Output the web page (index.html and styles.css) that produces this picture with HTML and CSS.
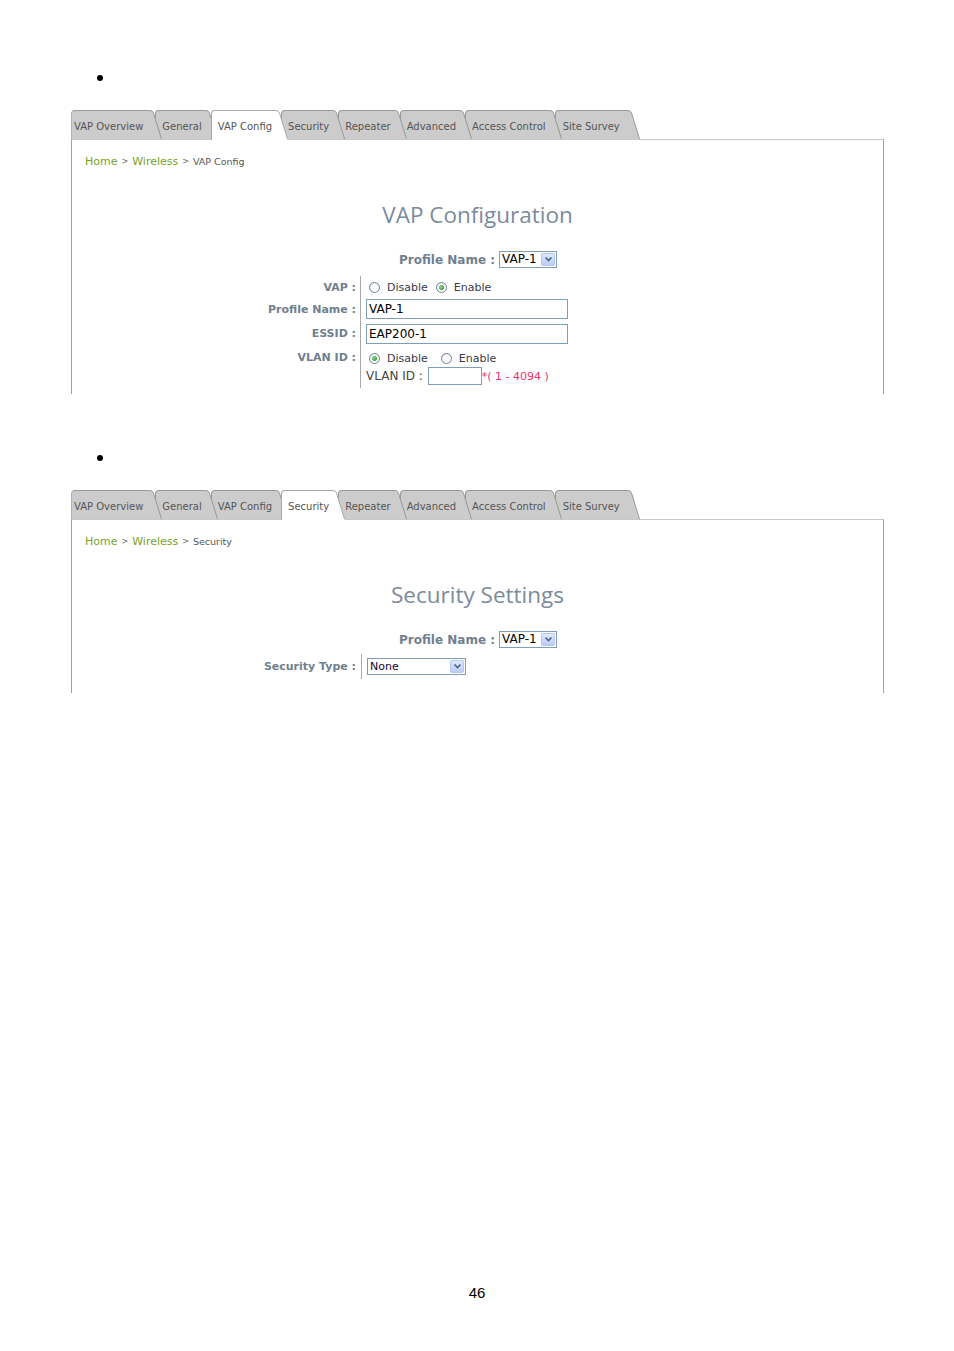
FILE: index.html
```html
<!DOCTYPE html>
<html>
<head>
<meta charset="utf-8">
<link rel="stylesheet" href="styles.css">
</head>
<body>
<div class="page">
  <div class="bullet"><span class="dot"></span></div>
  <div class="shot">
    <div class="tabs">
      <div class="tab first"><span class="tab-body">VAP Overview</span><svg class="tab-edge" width="14" height="29" viewBox="0 0 14 29"><path d="M0 0.5 H2 Q4.5 0.5 5.5 3 L13.5 29 H0 Z" class="edge-fill"/><path d="M0 0.5 H2 Q4.5 0.5 5.5 3 L13.5 29" class="edge-line"/></svg></div>
      <div class="tab"><span class="tab-body">General</span><svg class="tab-edge" width="14" height="29" viewBox="0 0 14 29"><path d="M0 0.5 H2 Q4.5 0.5 5.5 3 L13.5 29 H0 Z" class="edge-fill"/><path d="M0 0.5 H2 Q4.5 0.5 5.5 3 L13.5 29" class="edge-line"/></svg></div>
      <div class="tab active"><span class="tab-body">VAP Config</span><svg class="tab-edge" width="14" height="30" viewBox="0 0 14 30"><path d="M0 0.5 H2 Q4.5 0.5 5.5 3 L13.5 29 V30 H0 Z" class="edge-fill"/><path d="M0 0.5 H2 Q4.5 0.5 5.5 3 L13.5 29" class="edge-line"/></svg></div>
      <div class="tab"><span class="tab-body">Security</span><svg class="tab-edge" width="14" height="29" viewBox="0 0 14 29"><path d="M0 0.5 H2 Q4.5 0.5 5.5 3 L13.5 29 H0 Z" class="edge-fill"/><path d="M0 0.5 H2 Q4.5 0.5 5.5 3 L13.5 29" class="edge-line"/></svg></div>
      <div class="tab"><span class="tab-body">Repeater</span><svg class="tab-edge" width="14" height="29" viewBox="0 0 14 29"><path d="M0 0.5 H2 Q4.5 0.5 5.5 3 L13.5 29 H0 Z" class="edge-fill"/><path d="M0 0.5 H2 Q4.5 0.5 5.5 3 L13.5 29" class="edge-line"/></svg></div>
      <div class="tab"><span class="tab-body">Advanced</span><svg class="tab-edge" width="14" height="29" viewBox="0 0 14 29"><path d="M0 0.5 H2 Q4.5 0.5 5.5 3 L13.5 29 H0 Z" class="edge-fill"/><path d="M0 0.5 H2 Q4.5 0.5 5.5 3 L13.5 29" class="edge-line"/></svg></div>
      <div class="tab"><span class="tab-body">Access Control</span><svg class="tab-edge" width="14" height="29" viewBox="0 0 14 29"><path d="M0 0.5 H2 Q4.5 0.5 5.5 3 L13.5 29 H0 Z" class="edge-fill"/><path d="M0 0.5 H2 Q4.5 0.5 5.5 3 L13.5 29" class="edge-line"/></svg></div>
      <div class="tab last"><span class="tab-body">Site Survey</span><svg class="tab-edge" width="14" height="29" viewBox="0 0 14 29"><path d="M0 0.5 H2 Q4.5 0.5 5.5 3 L13.5 29 H0 Z" class="edge-fill"/><path d="M0 0.5 H2 Q4.5 0.5 5.5 3 L13.5 29" class="edge-line"/></svg></div>
    </div>
    <div class="panel panel-vap">
      <div class="crumb"><span class="crumb-link">Home</span><span class="crumb-sep">&gt;</span><span class="crumb-link">Wireless</span><span class="crumb-sep">&gt;</span><span class="crumb-cur">VAP Config</span></div>
      <div class="title">VAP Configuration</div>
      <div class="profile-row">
        <span class="profile-label">Profile Name :</span>
        <span class="select sel-small"><span class="select-text">VAP-1</span><span class="select-btn"><svg width="9" height="7" viewBox="0 0 9 7"><path d="M1.5 1.5 L4.5 4.5 L7.5 1.5" class="chev"/></svg></span></span>
      </div>
      <div class="form">
        <div class="lbl row-vap">VAP :</div>
        <div class="val row-vap">
          <span class="radio"></span><span class="opt">Disable</span>
          <span class="radio checked gap8"></span><span class="opt">Enable</span>
        </div>
        <div class="lbl row-pn">Profile Name :</div>
        <div class="val row-pn"><span class="input wide">VAP-1</span></div>
        <div class="lbl row-essid">ESSID :</div>
        <div class="val row-essid"><span class="input wide">EAP200-1</span></div>
        <div class="lbl lbl-top row-vlan">VLAN ID :</div>
        <div class="val val-stack row-vlan">
          <div class="vlan-line">
            <span class="radio checked"></span><span class="opt">Disable</span>
            <span class="radio gap13"></span><span class="opt">Enable</span>
          </div>
          <div class="vlan-line2">
            <span class="vlan-text">VLAN ID :</span>
            <span class="input small"></span>
            <span class="note">*( 1 - 4094 )</span>
          </div>
        </div>
      </div>
    </div>
  </div>

  <div class="bullet bullet2"><span class="dot"></span></div>
  <div class="shot">
    <div class="tabs">
      <div class="tab first"><span class="tab-body">VAP Overview</span><svg class="tab-edge" width="14" height="29" viewBox="0 0 14 29"><path d="M0 0.5 H2 Q4.5 0.5 5.5 3 L13.5 29 H0 Z" class="edge-fill"/><path d="M0 0.5 H2 Q4.5 0.5 5.5 3 L13.5 29" class="edge-line"/></svg></div>
      <div class="tab"><span class="tab-body">General</span><svg class="tab-edge" width="14" height="29" viewBox="0 0 14 29"><path d="M0 0.5 H2 Q4.5 0.5 5.5 3 L13.5 29 H0 Z" class="edge-fill"/><path d="M0 0.5 H2 Q4.5 0.5 5.5 3 L13.5 29" class="edge-line"/></svg></div>
      <div class="tab"><span class="tab-body">VAP Config</span><svg class="tab-edge" width="14" height="29" viewBox="0 0 14 29"><path d="M0 0.5 H2 Q4.5 0.5 5.5 3 L13.5 29 H0 Z" class="edge-fill"/><path d="M0 0.5 H2 Q4.5 0.5 5.5 3 L13.5 29" class="edge-line"/></svg></div>
      <div class="tab active"><span class="tab-body">Security</span><svg class="tab-edge" width="14" height="30" viewBox="0 0 14 30"><path d="M0 0.5 H2 Q4.5 0.5 5.5 3 L13.5 29 V30 H0 Z" class="edge-fill"/><path d="M0 0.5 H2 Q4.5 0.5 5.5 3 L13.5 29" class="edge-line"/></svg></div>
      <div class="tab"><span class="tab-body">Repeater</span><svg class="tab-edge" width="14" height="29" viewBox="0 0 14 29"><path d="M0 0.5 H2 Q4.5 0.5 5.5 3 L13.5 29 H0 Z" class="edge-fill"/><path d="M0 0.5 H2 Q4.5 0.5 5.5 3 L13.5 29" class="edge-line"/></svg></div>
      <div class="tab"><span class="tab-body">Advanced</span><svg class="tab-edge" width="14" height="29" viewBox="0 0 14 29"><path d="M0 0.5 H2 Q4.5 0.5 5.5 3 L13.5 29 H0 Z" class="edge-fill"/><path d="M0 0.5 H2 Q4.5 0.5 5.5 3 L13.5 29" class="edge-line"/></svg></div>
      <div class="tab"><span class="tab-body">Access Control</span><svg class="tab-edge" width="14" height="29" viewBox="0 0 14 29"><path d="M0 0.5 H2 Q4.5 0.5 5.5 3 L13.5 29 H0 Z" class="edge-fill"/><path d="M0 0.5 H2 Q4.5 0.5 5.5 3 L13.5 29" class="edge-line"/></svg></div>
      <div class="tab last"><span class="tab-body">Site Survey</span><svg class="tab-edge" width="14" height="29" viewBox="0 0 14 29"><path d="M0 0.5 H2 Q4.5 0.5 5.5 3 L13.5 29 H0 Z" class="edge-fill"/><path d="M0 0.5 H2 Q4.5 0.5 5.5 3 L13.5 29" class="edge-line"/></svg></div>
    </div>
    <div class="panel panel-sec">
      <div class="crumb"><span class="crumb-link">Home</span><span class="crumb-sep">&gt;</span><span class="crumb-link">Wireless</span><span class="crumb-sep">&gt;</span><span class="crumb-cur">Security</span></div>
      <div class="title">Security Settings</div>
      <div class="profile-row">
        <span class="profile-label">Profile Name :</span>
        <span class="select sel-small"><span class="select-text">VAP-1</span><span class="select-btn"><svg width="9" height="7" viewBox="0 0 9 7"><path d="M1.5 1.5 L4.5 4.5 L7.5 1.5" class="chev"/></svg></span></span>
      </div>
      <div class="form form-sec">
        <div class="lbl row-sec">Security Type :</div>
        <div class="val row-sec"><span class="select sel-wide"><span class="select-text none">None</span><span class="select-btn"><svg width="9" height="7" viewBox="0 0 9 7"><path d="M1.5 1.5 L4.5 4.5 L7.5 1.5" class="chev"/></svg></span></span></div>
      </div>
    </div>
  </div>

  <div class="pagenum">46</div>
</div>
</body>
</html>
```

FILE: styles.css
```css
html, body {
  margin: 0;
  padding: 0;
  background: #fff;
}
body {
  font-family: "DejaVu Sans", Verdana, sans-serif;
  width: 954px;
}
.page {
  padding-top: 68px;
}
.bullet {
  margin-left: 97px;
  height: 20px;
  display: flex;
  align-items: center;
}
.dot {
  width: 6px;
  height: 6px;
  border-radius: 50%;
  background: #000;
}
.bullet2 {
  margin-top: 54px;
}
.shot {
  margin: 22px 0 0 71px;
  width: 813px;
}

/* tabs */
.tabs {
  display: flex;
  align-items: flex-start;
  height: 29px;
  position: relative;
  z-index: 2;
}
.tab {
  display: flex;
  position: relative;
  margin-right: -7px;
  height: 29px;
}
.tab:nth-child(1) { z-index: 8; }
.tab:nth-child(2) { z-index: 7; }
.tab:nth-child(3) { z-index: 6; }
.tab:nth-child(4) { z-index: 5; }
.tab:nth-child(5) { z-index: 4; }
.tab:nth-child(6) { z-index: 3; }
.tab:nth-child(7) { z-index: 2; }
.tab:nth-child(8) { z-index: 1; }
.tab.active { z-index: 10; height: 30px; }
.tab-body {
  box-sizing: border-box;
  height: 29px;
  padding: 0 2px 0 6px;
  background: #cccccc;
  border-top: 1px solid #999;
  border-left: 1px solid #999;
  border-top-left-radius: 4px;
  font-size: 10px;
  line-height: 32px;
  color: #555;
  white-space: nowrap;
}
.tab.first .tab-body {
  padding-left: 2px;
  padding-right: 5px;
  border-left-color: #b0b0b0;
}
.tab.last .tab-body {
  padding-left: 7px;
  padding-right: 6px;
}
.tab.active .tab-body {
  background: #fff;
  height: 30px;
  border-color: #a8a8a8;
}
.tab-edge {
  display: block;
  flex: none;
}
.edge-fill { fill: #cccccc; }
.edge-line { fill: none; stroke: #999; stroke-width: 1; }
.tab.active .edge-fill { fill: #fff; }
.tab.active .edge-line { stroke: #a8a8a8; }

/* panel */
.panel {
  position: relative;
  z-index: 1;
  box-sizing: border-box;
  border-top: 1px solid #c8c8c8;
  border-left: 1px solid #a0a0a0;
  border-right: 1px solid #a0a0a0;
}
.panel-vap { height: 255px; }
.panel-sec { height: 174px; }

.crumb {
  padding: 13px 0 0 13px;
  height: 13px;
  line-height: 13px;
  white-space: nowrap;
}
.crumb-link {
  font-size: 11px;
  color: #7aa21e;
}
.crumb-sep {
  font-size: 8px;
  color: #666;
  margin: 0 4px;
  position: relative;
  top: -1px;
}
.crumb-cur {
  font-size: 9.5px;
  color: #555;
}
.title {
  margin-top: 35px;
  height: 28px;
  line-height: 28px;
  text-align: center;
  font-family: "Open Sans", sans-serif;
  font-size: 22.5px;
  color: #7b8b9b;
}
.profile-row {
  margin-top: 21px;
  height: 18px;
  display: flex;
  justify-content: center;
  align-items: center;
  gap: 5px;
}
.profile-label {
  font-size: 12px;
  font-weight: bold;
  color: #6f7f8f;
  position: relative;
  left: 1px;
  top: 1px;
}

/* select */
.select {
  display: inline-flex;
  align-items: center;
  box-sizing: border-box;
  height: 17px;
  border: 1px solid #7f9db9;
  background: #fff;
}
.sel-small { width: 58px; }
.sel-wide { width: 99px; }
.select-text {
  flex: 1;
  padding-left: 2px;
  font-size: 12px;
  line-height: 15px;
  color: #000;
  white-space: nowrap;
}
.select-text.none {
  font-size: 11px;
  color: #1a0030;
}
.select-btn {
  box-sizing: border-box;
  width: 14px;
  height: 13px;
  margin-right: 1px;
  display: flex;
  align-items: center;
  justify-content: center;
  background: linear-gradient(#dfe8fd, #b9cdf7);
  border: 1px solid #b3c6ee;
  border-radius: 2px;
}
.select-btn svg { display: block; }
.chev {
  fill: none;
  stroke: #4d6185;
  stroke-width: 1.6;
}

/* form */
.form {
  margin-top: 8px;
  display: grid;
  grid-template-columns: 284px 1fr;
}
.form-sec {
  margin-top: 6px;
}
.lbl {
  display: flex;
  align-items: center;
  justify-content: flex-end;
  font-size: 11px;
  font-weight: bold;
  color: #6f7f8f;
  white-space: nowrap;
}
.lbl-top {
  align-items: flex-start;
  padding-top: 3px;
  line-height: 18px;
}
.val {
  margin-left: 4px;
  border-left: 1px solid #a8a8a8;
  padding-left: 5px;
  display: flex;
  align-items: center;
  font-size: 11px;
  color: #3a3a4a;
}
.row-vap { height: 22px; }
.row-pn { height: 23px; }
.row-pn.val { padding-top: 1px; padding-bottom: 2px; box-sizing: border-box; }
.row-essid { height: 25px; }
.row-essid.val { padding-top: 3px; padding-bottom: 2px; box-sizing: border-box; }
.row-vlan { height: 42px; box-sizing: border-box; }
.row-sec { height: 25px; }
.row-sec.val { margin-left: 5px; }

.val-stack {
  flex-direction: column;
  align-items: flex-start;
  padding-top: 3px;
  box-sizing: border-box;
}
.vlan-line {
  height: 18px;
  display: flex;
  align-items: center;
}
.vlan-line2 {
  height: 18px;
  display: flex;
  align-items: center;
}
.vlan-text {
  font-size: 12px;
  color: #444;
  margin-right: 5px;
}
.note {
  font-size: 11px;
  color: #e8336b;
  white-space: nowrap;
}

.radio {
  box-sizing: border-box;
  width: 11px;
  height: 11px;
  margin-left: 3px;
  border: 1px solid #6d8194;
  border-radius: 50%;
  background: radial-gradient(circle at 60% 65%, #ffffff 40%, #dfe3e8 100%);
  display: inline-flex;
  align-items: center;
  justify-content: center;
  flex: none;
}
.radio.checked::after {
  content: "";
  width: 5px;
  height: 5px;
  border-radius: 50%;
  background: radial-gradient(circle at 40% 40%, #8fdc8f 0%, #2f9a35 70%);
}
.gap8 { margin-left: 8px; }
.gap13 { margin-left: 13px; }
.opt {
  margin-left: 7px;
  white-space: nowrap;
}

.input {
  box-sizing: border-box;
  display: inline-block;
  border: 1px solid #7f9db9;
  background: #fff;
  font-size: 12px;
  color: #000;
  padding-left: 2px;
  white-space: nowrap;
}
.input.wide {
  width: 202px;
  height: 20px;
  line-height: 18px;
}
.input.small {
  width: 54px;
  height: 18px;
}

.pagenum {
  margin-top: 591px;
  height: 18px;
  line-height: 18px;
  text-align: center;
  font-family: "Liberation Sans", sans-serif;
  font-size: 15px;
  color: #000;
}
```
